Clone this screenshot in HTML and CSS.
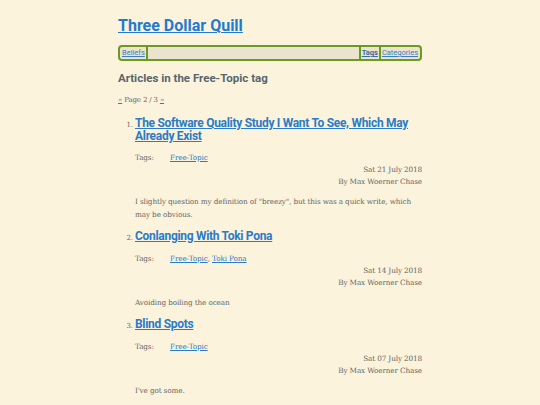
FILE: index.html
```html
<!DOCTYPE html>
<html lang="en">
<head>
<meta charset="utf-8">
<title>Three Dollar Quill</title>
<link rel="stylesheet" href="styles.css">
</head>
<body>
<div class="page">
  <header class="site-header">
    <h1 class="site-title"><a href="#">Three Dollar Quill</a></h1>
    <nav class="nav">
      <a class="nav-item nav-left" href="#">Beliefs</a>
      <span class="nav-spacer"></span>
      <a class="nav-item nav-current" href="#">Tags</a>
      <a class="nav-item nav-last" href="#">Categories</a>
    </nav>
  </header>
  <main>
    <h2 class="tag-heading">Articles in the Free-Topic tag</h2>
    <p class="pager"><a href="#">«</a> Page 2 / 3 <a href="#">»</a></p>
    <ol class="articles">
      <li class="article">
        <h3 class="article-title"><a href="#">The Software Quality Study I Want To See, Which May Already Exist</a></h3>
        <div class="tags"><span class="tags-label">Tags:</span><span class="tags-list"><a href="#">Free-Topic</a></span></div>
        <div class="meta"><div>Sat 21 July 2018</div><div>By Max Woerner Chase</div></div>
        <p class="summary">I slightly question my definition of "breezy", but this was a quick write, which may be obvious.</p>
      </li>
      <li class="article">
        <h3 class="article-title"><a href="#">Conlanging With Toki Pona</a></h3>
        <div class="tags"><span class="tags-label">Tags:</span><span class="tags-list"><a href="#">Free-Topic</a>, <a href="#">Toki Pona</a></span></div>
        <div class="meta"><div>Sat 14 July 2018</div><div>By Max Woerner Chase</div></div>
        <p class="summary">Avoiding boiling the ocean</p>
      </li>
      <li class="article">
        <h3 class="article-title"><a href="#">Blind Spots</a></h3>
        <div class="tags"><span class="tags-label">Tags:</span><span class="tags-list"><a href="#">Free-Topic</a></span></div>
        <div class="meta"><div>Sat 07 July 2018</div><div>By Max Woerner Chase</div></div>
        <p class="summary">I've got some.</p>
      </li>
    </ol>
  </main>
</div>
</body>
</html>
```

FILE: styles.css
```css
html, body {
  margin: 0;
  padding: 0;
  background: #fbf3dc;
}
body {
  font-family: "DejaVu Serif", serif;
  color: #666;
  font-size: 7.3px;
  letter-spacing: -0.15px;
}
a { color: #2a7bc8; }
.page {
  width: 304px;
  margin: 0 auto;
  padding-top: 15px;
}
.site-title {
  margin: 0;
  font-family: "Roboto", "Open Sans", sans-serif;
  font-weight: 700;
  font-size: 16px;
  line-height: 22px;
  letter-spacing: 0;
}
.site-title a { color: #1f7ad0; }
.nav {
  margin-top: 8px;
  display: flex;
  align-items: stretch;
  border: 2px solid #6b9a22;
  border-radius: 4px;
  background: #ebe3cf;
  height: 12px;
  font-family: "Roboto", "Open Sans", sans-serif;
  font-size: 7.5px;
  letter-spacing: 0;
  line-height: 12px;
  padding: 0 1px;
}
.nav-item {
  padding: 0 1px;
  color: #3b7fc0;
}
.nav-left { border-right: 2px solid #6b9a22; }
.nav-spacer { flex: 1; }
.nav-current { border-left: 2px solid #6b9a22; border-right: 2px solid #6b9a22; font-weight: 700; color: #336e9f; }
.tag-heading {
  margin: 9px 0 0;
  font-family: "Roboto", "Open Sans", sans-serif;
  font-size: 11.5px;
  letter-spacing: 0;
  font-weight: 700;
  color: #56666c;
  line-height: 16px;
}
.pager {
  margin: 8px 0 0;
  line-height: 12px;
  font-size: 7px;
}
.articles {
  margin: 7px 0 0;
  padding-left: 17px;
}
.article { margin-bottom: 5px; }
.article-title {
  margin: 0;
  font-family: "Roboto", "Open Sans", sans-serif;
  font-size: 12px;
  letter-spacing: -0.3px;
  font-weight: 700;
  line-height: 12.5px;
  padding-top: 4px;
}
.article::marker { font-size: 7px; }
.tags {
  margin-top: 9px;
  display: flex;
  line-height: 13px;
}
.tags-label { width: 35px; }
.meta {
  text-align: right;
  line-height: 12px;
}
.summary {
  margin: 8px 0 0;
  line-height: 12.5px;
}
```
